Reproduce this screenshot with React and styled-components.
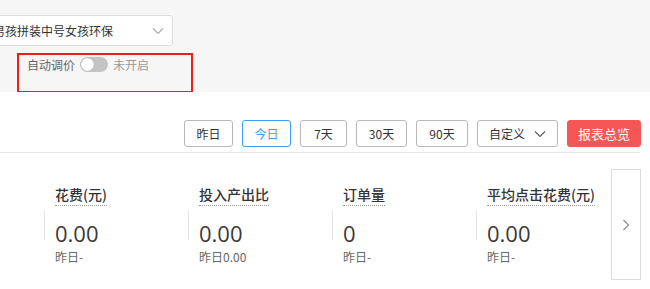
import React from "react";
import styled, { createGlobalStyle } from "styled-components";

const Global = createGlobalStyle`
  html, body {
    margin: 0;
    padding: 0;
    background: #fff;
    font-family: "Noto Sans CJK SC", "Liberation Sans", sans-serif;
    color: #333;
    overflow: hidden;
  }
`;

const Page = styled.div`
  width: 650px;
  height: 289px;
  overflow: hidden;
`;

// grey settings band at the top
const TopBand = styled.div`
  height: 92px;
  background: #f6f6f6;
  padding-top: 15px;
  box-sizing: border-box;
`;

const Select = styled.div`
  width: 193px;
  height: 31px;
  margin-left: -20px;
  box-sizing: border-box;
  background: #fff;
  border: 1px solid #dcdcdc;
  border-radius: 3px;
  display: flex;
  align-items: center;
  justify-content: space-between;
  padding: 0 8px 0 12px;
  font-size: 12px;
  color: #333;
  white-space: nowrap;
`;

const AutoBox = styled.div`
  width: 176px;
  height: 39px;
  margin: 7px 0 0 17px;
  box-sizing: border-box;
  border: 2px solid #f21b1b;
  border-bottom-width: 1px;
  display: flex;
  align-items: flex-start;
  padding: 1px 0 0 8px;
  gap: 5px;
  font-size: 12px;
  line-height: 17px;
`;

const AutoLabel = styled.span`
  color: #666;
`;

const Toggle = styled.span`
  width: 28px;
  height: 15px;
  margin-top: 1px;
  border-radius: 8px;
  background: #c4c4c4;
  display: flex;
  align-items: center;
  padding: 0 1px;
  box-sizing: border-box;

  &::after {
    content: "";
    width: 13px;
    height: 13px;
    border-radius: 50%;
    background: #fff;
    box-shadow: 0 0 1px rgba(0, 0, 0, 0.3);
  }
`;

const AutoState = styled.span`
  color: #9a9a9a;
`;

const Toolbar = styled.div`
  display: flex;
  justify-content: flex-end;
  gap: 9px;
  padding: 28px 9px 0 0;
  height: 27px;
`;

const DayButton = styled.button`
  width: ${(p) => p.$w}px;
  height: 27px;
  padding: 0;
  box-sizing: border-box;
  border-radius: 3px;
  border: 1px solid ${(p) => (p.$active ? "#3d9df2" : p.$primary ? "#f55656" : "#b8b8b8")};
  background: ${(p) => (p.$primary ? "#f55656" : "#fff")};
  color: ${(p) => (p.$active ? "#3d9df2" : p.$primary ? "#fff" : "#333")};
  font-family: inherit;
  font-size: ${(p) => (p.$primary ? 13 : 12)}px;
  display: flex;
  align-items: center;
  justify-content: center;
  gap: 9px;
  cursor: pointer;
`;

const Rule = styled.div`
  height: 1px;
  background: #e6e6e6;
  margin: 5px 10px 0 0;
`;

const Metrics = styled.div`
  display: flex;
  padding: 16px 9px 0 44px;
`;

const Card = styled.div`
  flex: 0 0 ${(p) => p.$w}px;
  display: flex;
  align-items: flex-start;
`;

const Divider = styled.div`
  width: 1px;
  height: 30px;
  margin-top: 41px;
  background: #e3e3e3;
`;

const CardBody = styled.div`
  padding: 15px 0 0 10px;
  display: flex;
  flex-direction: column;
  align-items: flex-start;
`;

const Label = styled.span`
  font-size: 14px;
  line-height: 20px;
  font-weight: 500;
  color: #333;
  border-bottom: 1px dotted #999;
  padding-bottom: 1px;
`;

const Value = styled.span`
  margin-top: 14px;
  font-size: 22px;
  line-height: 26px;
  color: #3a3a3a;
  font-family: "Open Sans", "Noto Sans CJK SC", sans-serif;
`;

const Sub = styled.span`
  margin-top: 2px;
  font-size: 12px;
  line-height: 18px;
  color: #666;
`;

const NextBox = styled.div`
  width: 30px;
  height: 111px;
  box-sizing: border-box;
  border: 1px solid #dcdcdc;
  display: flex;
  align-items: center;
  justify-content: center;
`;

const Chevron = ({ dir = "down", size = 12, color = "#999" }) => (
  <svg width={size} height={size} viewBox="0 0 12 12" fill="none">
    {dir === "down" ? (
      <path d="M1 3.5 L6 8.5 L11 3.5" stroke={color} strokeWidth="1.1" />
    ) : (
      <path d="M3.5 1 L8.5 6 L3.5 11" stroke={color} strokeWidth="1.1" />
    )}
  </svg>
);

const days = [
  { label: "昨日", w: 49 },
  { label: "今日", w: 49 },
  { label: "7天", w: 47 },
  { label: "30天", w: 51 },
  { label: "90天", w: 52 },
];

const metrics = [
  { label: "花费(元)", value: "0.00", sub: "昨日-" },
  { label: "投入产出比", value: "0.00", sub: "昨日0.00" },
  { label: "订单量", value: "0", sub: "昨日-" },
  { label: "平均点击花费(元)", value: "0.00", sub: "昨日-" },
];

export default function App() {
  return (
    <Page>
      <Global />
      <TopBand>
        <Select>
          <span>男孩拼装中号女孩环保</span>
          <Chevron color="#aaa" />
        </Select>
        <AutoBox>
          <AutoLabel>自动调价</AutoLabel>
          <Toggle />
          <AutoState>未开启</AutoState>
        </AutoBox>
      </TopBand>

      <Toolbar>
        {days.map((d) => (
          <DayButton key={d.label} $w={d.w} $active={d.label === "今日"}>
            {d.label}
          </DayButton>
        ))}
        <DayButton $w={81}>
          自定义
          <Chevron color="#555" />
        </DayButton>
        <DayButton $primary $w={74}>
          报表总览
        </DayButton>
      </Toolbar>
      <Rule />

      <Metrics>
        {metrics.map((m, i) => (
          <Card key={m.label} $w={i === 3 ? 135 : 144}>
            <Divider />
            <CardBody>
              <Label>{m.label}</Label>
              <Value>{m.value}</Value>
              <Sub>{m.sub}</Sub>
            </CardBody>
          </Card>
        ))}
        <NextBox>
          <Chevron dir="right" color="#888" />
        </NextBox>
      </Metrics>
    </Page>
  );
}
